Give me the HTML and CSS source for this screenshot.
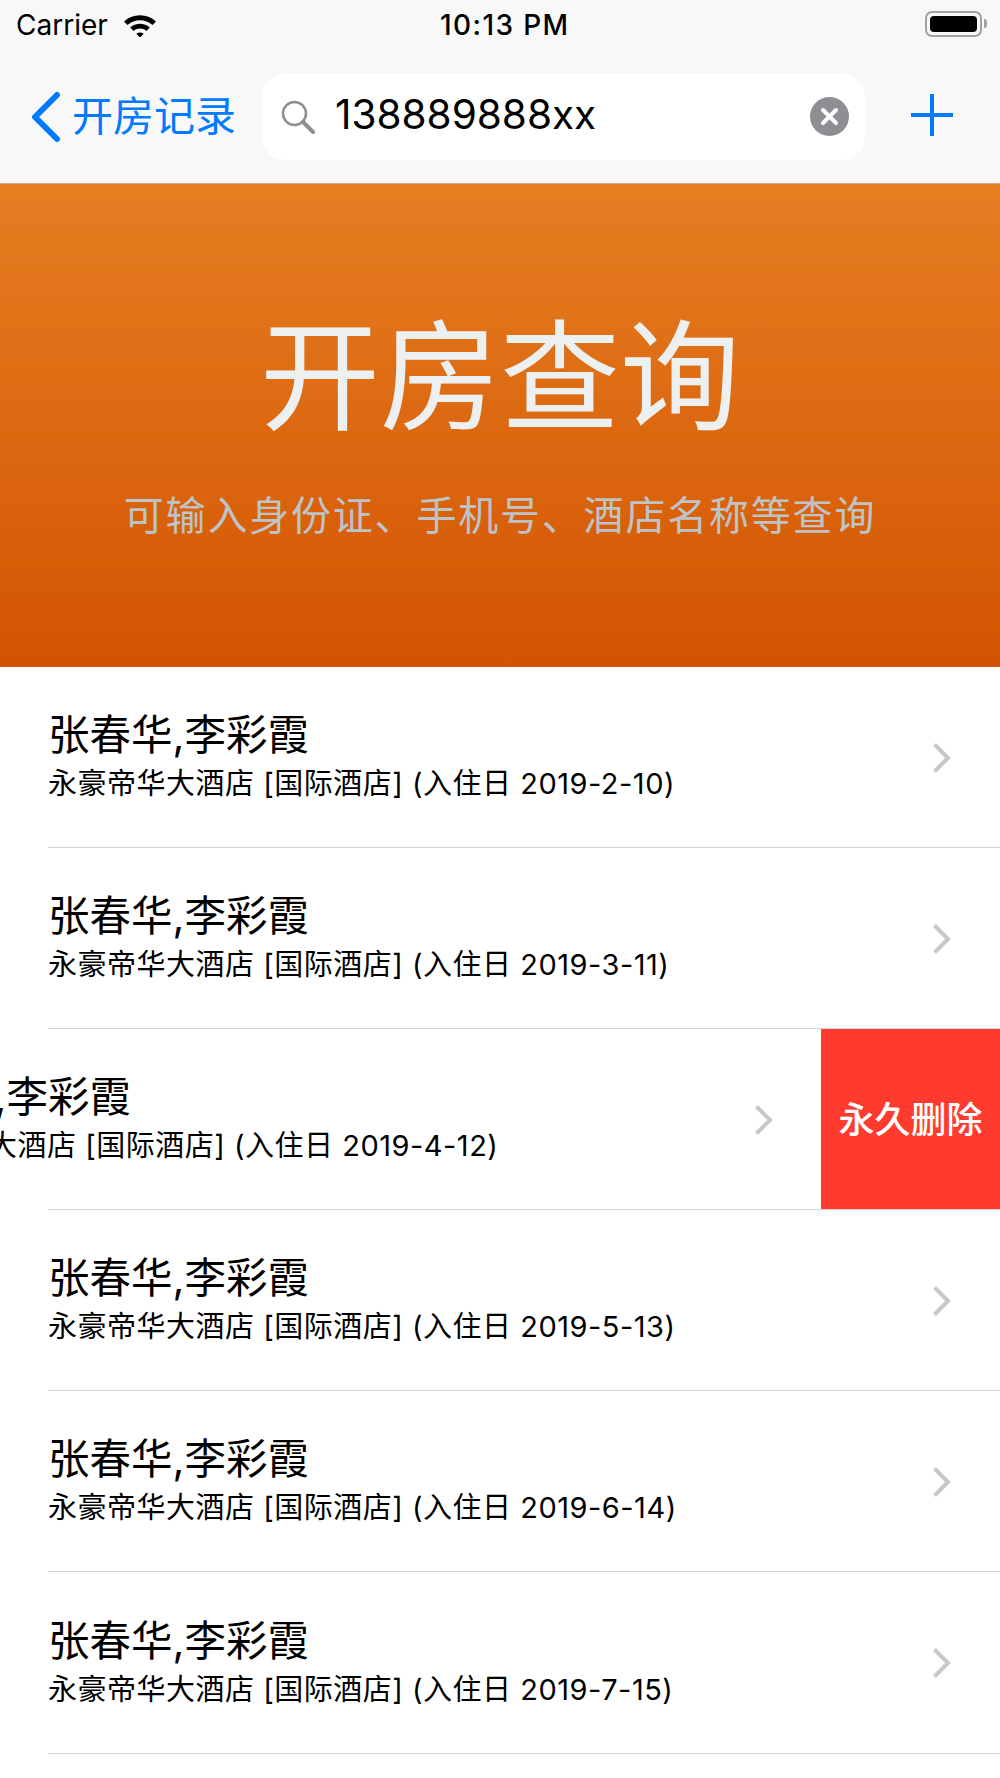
FILE: index.html
```html
<!DOCTYPE html>
<html lang="zh-CN">
<head>
    <meta charset="UTF-8">
    <title>开房查询</title>
    <link rel="stylesheet" href="styles.css">
</head>
<body>
    <div class="topbar">
        <div class="status">
            <div class="status-left">
                <span class="carrier">Carrier</span>
                <svg class="wifi" width="34" height="24" viewBox="0 0 34 24">
                    <path d="M1 8.500C10 0 24 0 33 8.500L29.600 12C22.500 5.500 11.500 5.500 4.400 12Z"/>
                    <path d="M7.200 14.600C12.800 9.600 21.200 9.600 26.800 14.600L23.400 18C19.600 14.800 14.400 14.800 10.600 18Z"/>
                    <path d="M13.300 20.800C15.500 19.200 18.500 19.200 20.700 20.800L17 24.500Z"/>
                </svg>
            </div>
            <span class="time">10:13 PM</span>
            <div class="battery"><div class="battery-fill"></div></div>
        </div>
        <div class="nav">
            <div class="back">
                <svg width="32" height="52" viewBox="0 0 32 52">
                    <path d="M28 4L6 26L28 48" fill="none" stroke="#007aff" stroke-width="6" stroke-linecap="round" stroke-linejoin="round"/>
                </svg>
                <span class="back-text">开房记录</span>
            </div>
            <div class="search">
                <svg width="36" height="36" viewBox="0 0 36 36">
                    <circle cx="14.500" cy="14.500" r="11.500" fill="none" stroke="#8e8e93" stroke-width="2.500"/>
                    <path d="M23 23L33 33" stroke="#8e8e93" stroke-width="4" stroke-linecap="round"/>
                </svg>
                <span class="search-text">138889888xx</span>
                <svg class="clear" width="39" height="39" viewBox="0 0 39 39">
                    <circle cx="19.500" cy="19.500" r="19.500" fill="#8e8e93"/>
                    <path d="M13 13L26 26M26 13L13 26" stroke="#fff" stroke-width="4" stroke-linecap="round"/>
                </svg>
            </div>
            <svg class="plus" width="42" height="42" viewBox="0 0 42 42">
                <path d="M21 0V42M0 21H42" stroke="#007aff" stroke-width="4"/>
            </svg>
        </div>
    </div>

    <div class="hero">
        <h1>开房查询</h1>
        <p>可输入身份证、手机号、酒店名称等查询</p>
    </div>

    <ul class="list">
        <li class="row">
            <div class="row-text">
                <div class="name">张春华,李彩霞</div>
                <div class="info">永豪帝华大酒店 [国际酒店] (入住日 2019-2-10)</div>
            </div>
            <svg class="chevron" width="20" height="32" viewBox="0 0 20 32"><path d="M2.500 2.500L16 16L2.500 29.500" fill="none" stroke="#c7c7cc" stroke-width="4"/></svg>
        </li>
        <li class="row">
            <div class="row-text">
                <div class="name">张春华,李彩霞</div>
                <div class="info">永豪帝华大酒店 [国际酒店] (入住日 2019-3-11)</div>
            </div>
            <svg class="chevron" width="20" height="32" viewBox="0 0 20 32"><path d="M2.500 2.500L16 16L2.500 29.500" fill="none" stroke="#c7c7cc" stroke-width="4"/></svg>
        </li>
        <li class="row row-swiped">
            <div class="row-slide">
                <div class="row-text">
                    <div class="name">张春华,李彩霞</div>
                    <div class="info">永豪帝华大酒店 [国际酒店] (入住日 2019-4-12)</div>
                </div>
                <svg class="chevron" width="20" height="32" viewBox="0 0 20 32"><path d="M2.500 2.500L16 16L2.500 29.500" fill="none" stroke="#c7c7cc" stroke-width="4"/></svg>
            </div>
            <div class="delete">永久删除</div>
        </li>
        <li class="row">
            <div class="row-text">
                <div class="name">张春华,李彩霞</div>
                <div class="info">永豪帝华大酒店 [国际酒店] (入住日 2019-5-13)</div>
            </div>
            <svg class="chevron" width="20" height="32" viewBox="0 0 20 32"><path d="M2.500 2.500L16 16L2.500 29.500" fill="none" stroke="#c7c7cc" stroke-width="4"/></svg>
        </li>
        <li class="row">
            <div class="row-text">
                <div class="name">张春华,李彩霞</div>
                <div class="info">永豪帝华大酒店 [国际酒店] (入住日 2019-6-14)</div>
            </div>
            <svg class="chevron" width="20" height="32" viewBox="0 0 20 32"><path d="M2.500 2.500L16 16L2.500 29.500" fill="none" stroke="#c7c7cc" stroke-width="4"/></svg>
        </li>
        <li class="row">
            <div class="row-text">
                <div class="name">张春华,李彩霞</div>
                <div class="info">永豪帝华大酒店 [国际酒店] (入住日 2019-7-15)</div>
            </div>
            <svg class="chevron" width="20" height="32" viewBox="0 0 20 32"><path d="M2.500 2.500L16 16L2.500 29.500" fill="none" stroke="#c7c7cc" stroke-width="4"/></svg>
        </li>
    </ul>
</body>
</html>
```

FILE: styles.css
```css
* {
    box-sizing: border-box;
}
html, body {
    height: 100%;
}
body {
    margin: 0;
    overflow: hidden;
    background-color: #fff;
    color: #000;
    font-family: "Inter", "Noto Sans CJK SC", sans-serif;
}
.topbar {
    height: 184px;
    background-color: #f8f8f8;
    border-bottom: 1px solid #c9a98c;
}
.status {
    height: 50px;
    padding: 0 18px 0 16px;
    display: flex;
    align-items: center;
    justify-content: space-between;
    position: relative;
}
.status-left {
    display: flex;
    align-items: center;
    gap: 15px;
}
.carrier {
    font-size: 28px;
}
.wifi {
    fill: #000;
}
.time {
    font-size: 28px;
    font-weight: 500;
    letter-spacing: 1.400px;
    position: absolute;
    left: 440px;
}
.battery {
    width: 57px;
    height: 26px;
    padding: 3px;
    margin-bottom: 2px;
    border: 2px solid #a0a0a4;
    border-radius: 7px;
    position: relative;
}
.battery::after {
    content: "";
    position: absolute;
    right: -7px;
    top: 6px;
    width: 3px;
    height: 9px;
    background-color: #a0a0a4;
    border-radius: 0 3px 3px 0;
}
.battery-fill {
    height: 100%;
    background-color: #000;
    border-radius: 4px;
}
.nav {
    height: 133px;
    padding: 23px 47px 0 29px;
    display: flex;
    align-items: flex-start;
}
.back {
    width: 233px;
    height: 87px;
    display: flex;
    align-items: center;
    gap: 11px;
    color: #007aff;
    font-size: 41px;
}
.back-text {
    padding-bottom: 8px;
}
.search {
    width: 603px;
    height: 87px;
    padding: 0 16px 0 18px;
    display: flex;
    align-items: center;
    background-color: #fff;
    border-radius: 24px;
}
.search-text {
    flex: 1;
    margin-left: 19px;
    padding-bottom: 4px;
    font-size: 40.500px;
}
.plus {
    margin: 21px 0 0 46px;
}
.hero {
    height: 483px;
    padding-top: 124px;
    text-align: center;
    background: linear-gradient(#e67e22, #d35400);
    color: #ecf0f1;
}
.hero h1 {
    margin: 0;
    font-size: 120px;
    font-weight: 400;
    line-height: 140px;
}
.hero p {
    margin: 42px 0 0;
    font-size: 40px;
    line-height: 52px;
    letter-spacing: 1.800px;
    color: #bdc3c7;
}
.list {
    margin: 0;
    padding: 0;
    list-style: none;
}
.row {
    height: 181.100px;
    padding: 0 48px;
    display: flex;
    align-items: center;
    justify-content: space-between;
    position: relative;
}
.row::after {
    content: "";
    position: absolute;
    left: 48px;
    right: 0;
    bottom: 0;
    height: 1px;
    background-color: #d4d4d6;
}
.row-text {
    padding-bottom: 9px;
}
.name {
    font-size: 41.500px;
    line-height: 62px;
}
.info {
    font-size: 29px;
    line-height: 36px;
    letter-spacing: 0.500px;
}
.row-swiped {
    padding: 0;
    overflow: hidden;
}
.row-slide {
    width: 999px;
    padding: 0 47px 0 48px;
    flex-shrink: 0;
    display: flex;
    align-items: center;
    justify-content: space-between;
    margin-left: -178px;
}
.delete {
    width: 179px;
    height: 180px;
    padding-bottom: 4px;
    margin-bottom: 1px;
    flex-shrink: 0;
    display: flex;
    align-items: center;
    justify-content: center;
    background-color: #ff3b30;
    color: #fff;
    font-size: 36px;
    font-weight: 500;
    position: relative;
    z-index: 1;
}
```
